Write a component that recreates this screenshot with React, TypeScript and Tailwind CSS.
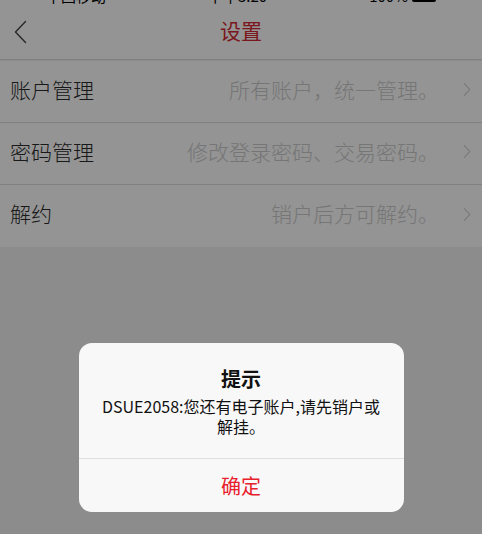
import React from 'react';

const rows = [
  { label: '账户管理', hint: '所有账户，统一管理。' },
  { label: '密码管理', hint: '修改登录密码、交易密码。' },
  { label: '解约', hint: '销户后方可解约。' },
];

const ChevronRight = ({ className }: { className?: string }) => (
  <svg className={className} viewBox="0 0 10 18" fill="none" stroke="currentColor" strokeWidth={1.3}>
    <path d="M1.5 1.5 8.5 9 1.5 16.5" strokeLinecap="round" strokeLinejoin="round" />
  </svg>
);

const ChevronLeft = ({ className }: { className?: string }) => (
  <svg className={className} viewBox="0 0 13 24" fill="none" stroke="currentColor" strokeWidth={1.4}>
    <path d="M11.5 1.5 1.5 12 11.5 22.5" strokeLinecap="round" strokeLinejoin="round" />
  </svg>
);

export default function App() {
  return (
    <div
      className="relative w-[482px] h-[534px] overflow-hidden bg-[#f1f1f1]"
      style={{ fontFamily: '"Noto Sans CJK SC", "Noto Sans", sans-serif' }}
    >
      {/* status bar, mostly scrolled off */}
      <div className="h-[6px] overflow-hidden bg-white">
        <div className="-mt-[13px] flex items-center justify-between px-[46px] text-[15px] leading-[18px] text-black">
          <span>中国移动</span>
          <span>下午3:20</span>
          <span className="flex items-center gap-1">
            <span>100%</span>
            <span className="inline-block w-[24px] h-[11px] bg-black rounded-[2px]" />
          </span>
        </div>
      </div>

      {/* nav bar */}
      <div className="h-[54px] bg-white flex items-center relative border-b border-[#dcdcdc]">
        <ChevronLeft className="w-[13px] h-[24px] ml-[14px] mb-[2px] text-[#444]" />
        <div className="absolute inset-0 flex items-center justify-center pb-[4px] text-[21px] text-[#d42a33]">设置</div>
      </div>

      <div className="h-[1px]" />

      {/* settings list */}
      <div className="bg-white">
        {rows.map((r, i) => (
          <div
            key={r.label}
            className={`h-[62px] flex items-center pl-[10px] pr-[11px] pb-[4px] ${i < rows.length - 1 ? 'border-b border-[#dedede]' : ''}`}
          >
            <span className="text-[21px] font-light text-[#2b2b2b]">{r.label}</span>
            <span className="ml-auto text-[21px] font-light text-[#cbcbcb]">{r.hint}</span>
            <ChevronRight className="w-[8px] h-[15px] ml-[24px] text-[#c9c9c9]" />
          </div>
        ))}
      </div>

      {/* mask + alert */}
      <div className="absolute inset-0 bg-black/[0.42] flex justify-center pt-[343px]">
        <div className="w-[325px] h-[169px] bg-[#f8f8f8] rounded-[13px] flex flex-col">
          <div className="flex-1 flex flex-col items-center pt-[23px] px-[16px] text-center">
            <div className="text-[20px] leading-[26px] font-semibold text-[#111]">提示</div>
            <div className="mt-[4px] text-[16px] leading-[20px] text-[#111]">
              DSUE2058:您还有电子账户,请先销户或
              <br />
              解挂。
            </div>
          </div>
          <div className="h-[54px] border-t border-[#dedede] flex items-center justify-center text-[20px] text-[#e8202c]">
            确定
          </div>
        </div>
      </div>
    </div>
  );
}
